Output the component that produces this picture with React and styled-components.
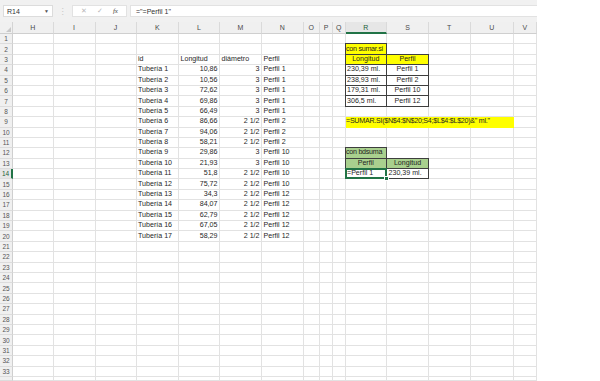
import React from 'react';
import styled, { createGlobalStyle, css } from 'styled-components';

const GlobalStyle = createGlobalStyle`
  html, body { margin: 0; padding: 0; background: #ffffff; }
  body { font-family: "Liberation Sans", Arial, sans-serif; }
`;

const COLS = [
  { key: 'H', w: 40.5 }, { key: 'I', w: 42 }, { key: 'J', w: 41 }, { key: 'K', w: 42.5 },
  { key: 'L', w: 41 }, { key: 'M', w: 42 }, { key: 'N', w: 41.5 }, { key: 'O', w: 16.5 },
  { key: 'P', w: 13 }, { key: 'Q', w: 12.5 }, { key: 'R', w: 41.5 }, { key: 'S', w: 42 },
  { key: 'T', w: 41.5 }, { key: 'U', w: 43.5 }, { key: 'V', w: 22.5 },
];
const ROWS = 33;

const YELLOW = '#ffff00';
const GREEN = '#a9d08e';

const pipes = [
  ['10,86', '3', 'Perfil 1'], ['10,56', '3', 'Perfil 1'], ['72,62', '3', 'Perfil 1'],
  ['69,86', '3', 'Perfil 1'], ['66,49', '3', 'Perfil 1'], ['86,66', '2 1/2', 'Perfil 2'],
  ['94,06', '2 1/2', 'Perfil 2'], ['58,21', '2 1/2', 'Perfil 2'], ['29,86', '3', 'Perfil 10'],
  ['21,93', '3', 'Perfil 10'], ['51,8', '2 1/2', 'Perfil 10'], ['75,72', '2 1/2', 'Perfil 10'],
  ['34,3', '2 1/2', 'Perfil 12'], ['84,07', '2 1/2', 'Perfil 12'], ['62,79', '2 1/2', 'Perfil 12'],
  ['67,05', '2 1/2', 'Perfil 12'], ['58,29', '2 1/2', 'Perfil 12'],
];

const cells = {
  K3: { text: 'id' }, L3: { text: 'Longitud' }, M3: { text: 'diámetro' }, N3: { text: 'Perfil' },
  R2: { text: 'con sumar.si', bg: YELLOW, boxed: true, tight: true },
  R3: { text: 'Longitud', bg: YELLOW, boxed: true, align: 'center' },
  S3: { text: 'Perfil', bg: YELLOW, boxed: true, align: 'center' },
  R4: { text: '230,39 ml.', boxed: true }, S4: { text: 'Perfil 1', boxed: true, align: 'center' },
  R5: { text: '238,93 ml.', boxed: true }, S5: { text: 'Perfil 2', boxed: true, align: 'center' },
  R6: { text: '179,31 ml.', boxed: true }, S6: { text: 'Perfil 10', boxed: true, align: 'center' },
  R7: { text: '306,5 ml.', boxed: true }, S7: { text: 'Perfil 12', boxed: true, align: 'center' },
  R9: { text: '=SUMAR.SI($N$4:$N$20;S4;$L$4:$L$20)&" ml."', bg: YELLOW, span: 4, tight: true },
  R12: { text: 'con bdsuma', bg: GREEN, boxed: true, tight: true },
  R13: { text: 'Perfil', bg: GREEN, boxed: true, align: 'center' },
  S13: { text: 'Longitud', bg: GREEN, boxed: true, align: 'center' },
  R14: { text: '=Perfil 1', boxed: true, selected: true },
  S14: { text: '230,39 ml.', boxed: true },
};
pipes.forEach(([len, dia, prof], i) => {
  const r = i + 4;
  cells[`K${r}`] = { text: `Tubería ${i + 1}` };
  cells[`L${r}`] = { text: len, align: 'right' };
  cells[`M${r}`] = { text: dia, align: 'right' };
  cells[`N${r}`] = { text: prof };
});

const Page = styled.div`
  width: 600px;
  height: 381px;
  overflow: hidden;
  background: #ffffff;
  display: flex;
  flex-direction: column;
`;

const FormulaBar = styled.div`
  width: 537px;
  height: 22px;
  box-sizing: border-box;
  padding: 5px 0 5px 3px;
  background: #f1f1f1;
  display: flex;
  align-items: stretch;
  flex-shrink: 0;
`;

const NameBox = styled.div`
  width: 50px;
  box-sizing: border-box;
  background: #ffffff;
  border: 1px solid #dcdcdc;
  display: flex;
  align-items: center;
  justify-content: space-between;
  padding: 0 3px 0 3px;
  font: 7px "Liberation Sans", Arial, sans-serif;
  color: #333;
`;

const Caret = styled.span`
  font-size: 5px;
  color: #555;
`;

const Dots = styled.div`
  width: 19px;
  display: flex;
  align-items: center;
  justify-content: center;
  color: #c4c4c4;
  font: 8px "DejaVu Sans", sans-serif;
`;

const IconBox = styled.div`
  width: 55px;
  box-sizing: border-box;
  background: #ffffff;
  border: 1px solid #e2e2e2;
  display: flex;
  align-items: center;
  justify-content: space-around;
  padding: 0 3px;
  margin-right: 3px;
`;

const Icon = styled.span`
  font: ${p => (p.$fx ? 'italic 7px "Liberation Serif", serif' : '7px "DejaVu Sans", sans-serif')};
  color: ${p => (p.$fx ? '#444' : '#b8b8b8')};
`;

const FormulaInput = styled.div`
  flex: 1;
  background: #ffffff;
  border: 1px solid #e2e2e2;
  border-right: none;
  display: flex;
  align-items: center;
  padding-left: 5px;
  font: 7px "Liberation Sans", Arial, sans-serif;
  color: #333;
`;

const Sheet = styled.div`
  width: 536.5px;
  flex: 1;
  display: grid;
  grid-template-columns: 13px ${COLS.map(c => `${c.w}px`).join(' ')};
  grid-template-rows: 12px repeat(${ROWS}, 10.4px) 1fr;
  grid-auto-rows: 1fr;
`;

const Corner = styled.div`
  background: #f0f0f0;
  border-right: 1px solid #d4d4d4;
  border-bottom: 1px solid #cfcfcf;
  box-sizing: border-box;
  display: flex;
  align-items: flex-end;
  justify-content: flex-end;
  padding: 0 1px 1px 0;
`;

const Triangle = styled.span`
  width: 0;
  height: 0;
  border-left: 5px solid transparent;
  border-bottom: 5px solid #c9c9c9;
`;

const ColHead = styled.div`
  box-sizing: border-box;
  background: ${p => (p.$active ? '#e6e6e6' : '#f0f0f0')};
  border-right: 1px solid #dadada;
  border-bottom: ${p => (p.$active ? '2px solid #217346' : '1px solid #cfcfcf')};
  display: flex;
  align-items: center;
  justify-content: center;
  font: 7px "Liberation Sans", Arial, sans-serif;
  color: ${p => (p.$active ? '#1d5e38' : '#4a4a4a')};
  overflow: hidden;
`;

const RowHead = styled.div`
  box-sizing: border-box;
  background: ${p => (p.$active ? '#e6e6e6' : '#f0f0f0')};
  border-right: ${p => (p.$active ? '2px solid #217346' : '1px solid #cfcfcf')};
  border-bottom: 1px solid #dcdcdc;
  display: flex;
  align-items: center;
  justify-content: center;
  font: 6.5px "Liberation Sans", Arial, sans-serif;
  color: ${p => (p.$active ? '#1d5e38' : '#555')};
`;

const Cell = styled.div`
  box-sizing: border-box;
  position: relative;
  border-right: 1px solid #e2e2e2;
  border-bottom: 1px solid #e2e2e2;
  background: ${p => p.$bg || 'transparent'};
  display: flex;
  align-items: center;
  justify-content: ${p => (p.$align === 'right' ? 'flex-end' : p.$align === 'center' ? 'center' : 'flex-start')};
  padding: 0 ${p => (p.$tight ? '0.5px' : '1.5px')};
  font: 7.1px/9px "Liberation Sans", Arial, sans-serif;
  letter-spacing: ${p => (p.$tight ? '-0.25px' : '0')};
  color: #1f1f1f;
  white-space: nowrap;
  ${p => p.$span && css`grid-column: span ${p.$span};`}
  ${p => p.$bg && !p.$boxed && css`
    border-right-color: ${p.$bg};
    border-bottom-color: ${p.$bg};
  `}
  ${p => p.$boxed && css`
    border-right-color: #3e3e3e;
    border-bottom-color: #3e3e3e;
    box-shadow: -1px 0 0 0 #3e3e3e, 0 -1px 0 0 #3e3e3e, -1px -1px 0 0 #3e3e3e;
  `}
  ${p => p.$selected && css`
    z-index: 2;
    box-shadow: inset 0 0 0 1px #217346, -1px 0 0 0 #217346, 0 -1px 0 0 #217346, -1px -1px 0 0 #217346;
    border-right-color: #217346;
    border-bottom-color: #217346;
    &::after {
      content: '';
      position: absolute;
      right: -3px;
      bottom: -3px;
      width: 3px;
      height: 3px;
      background: #217346;
      border: 1px solid #ffffff;
    }
  `}
`;

export default function App() {
  const rows = [];
  for (let r = 1; r <= ROWS + 1; r++) {
    const last = r > ROWS;
    rows.push(<RowHead key={`h${r}`} $active={r === 14}>{last ? '' : r}</RowHead>);
    let skip = 0;
    COLS.forEach(c => {
      if (skip > 0) { skip--; return; }
      const id = `${c.key}${r}`;
      const d = cells[id] || {};
      if (d.span) skip = d.span - 1;
      rows.push(
        <Cell
          key={id}
          $bg={d.bg}
          $boxed={d.boxed}
          $align={d.align}
          $span={d.span}
          $tight={d.tight}
          $selected={d.selected}
        >
          {d.text}
        </Cell>
      );
    });
  }

  return (
    <Page>
      <GlobalStyle />
      <FormulaBar>
        <NameBox>
          <span>R14</span>
          <Caret>▼</Caret>
        </NameBox>
        <Dots>⋮</Dots>
        <IconBox>
          <Icon>✕</Icon>
          <Icon>✓</Icon>
          <Icon $fx>fx</Icon>
        </IconBox>
        <FormulaInput>="=Perfil 1"</FormulaInput>
      </FormulaBar>
      <Sheet>
        <Corner><Triangle /></Corner>
        {COLS.map(c => (
          <ColHead key={c.key} $active={c.key === 'R'}>{c.key}</ColHead>
        ))}
        {rows}
      </Sheet>
    </Page>
  );
}
